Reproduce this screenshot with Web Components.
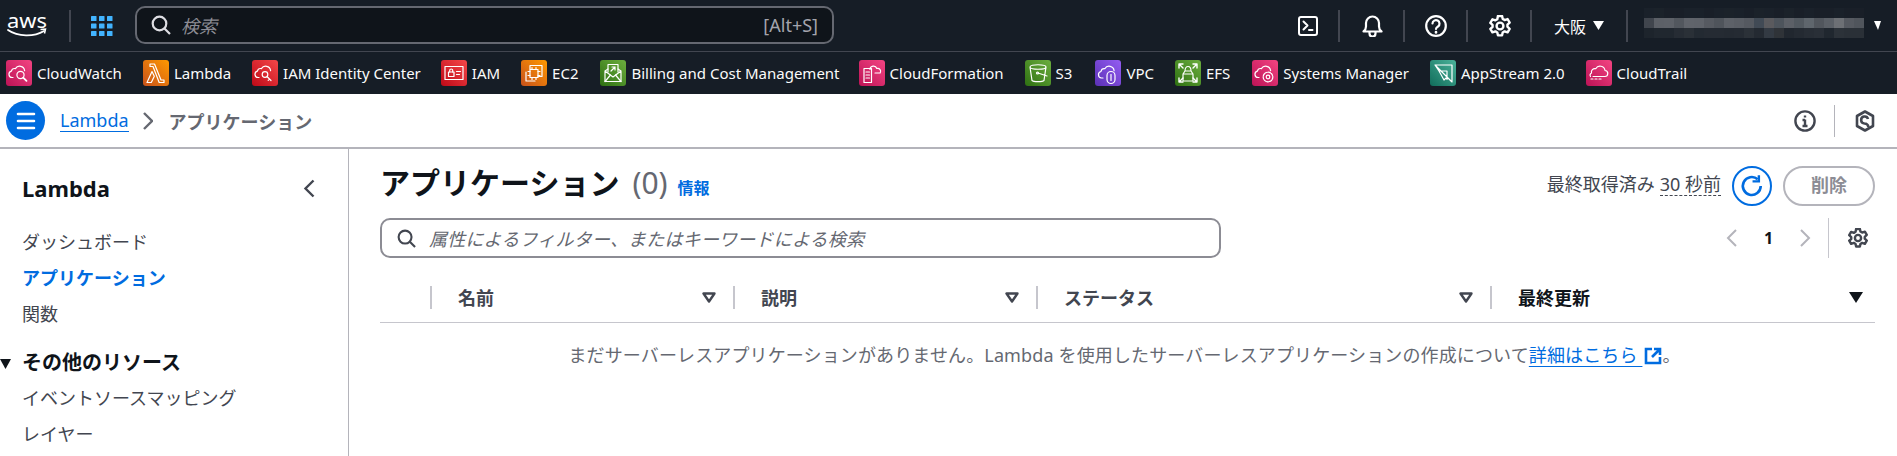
<!DOCTYPE html>
<html lang="ja"><head><meta charset="utf-8"><title>Lambda</title>
<style>
html,body{margin:0;padding:0;background:#fff;overflow:hidden}
body{font-family:"Noto Sans","Noto Sans CJK JP",sans-serif;color:#0f141a;width:1897px;height:456px}
</style></head><body>
<aws-console>
  <aws-topbar></aws-topbar>
  <aws-favbar>
    <fav-item c1="#f34482" c2="#bc1356" icon="cw" style="margin-left:6px">CloudWatch</fav-item>
    <fav-item c1="#ff9900" c2="#c8511b" icon="lambda">Lambda</fav-item>
    <fav-item c1="#f54749" c2="#be0917" icon="iamic">IAM Identity Center</fav-item>
    <fav-item c1="#f54749" c2="#be0917" icon="iam" style="margin-left:-1px">IAM</fav-item>
    <fav-item c1="#ff9900" c2="#c8511b" icon="ec2">EC2</fav-item>
    <fav-item c1="#6cae3e" c2="#2e7012" icon="bill" style="margin-left:1px">Billing and Cost Management</fav-item>
    <fav-item c1="#f34482" c2="#bc1356" icon="cfn" style="margin-left:-2px">CloudFormation</fav-item>
    <fav-item c1="#6cae3e" c2="#2e7012" icon="s3">S3</fav-item>
    <fav-item c1="#945df2" c2="#5a30b5" icon="vpc" style="margin-left:2px">VPC</fav-item>
    <fav-item c1="#6cae3e" c2="#2e7012" icon="efs">EFS</fav-item>
    <fav-item c1="#f34482" c2="#bc1356" icon="ssm" style="margin-left:1px">Systems Manager</fav-item>
    <fav-item c1="#4ab29a" c2="#116d5b" icon="as2">AppStream 2.0</fav-item>
    <fav-item c1="#f34482" c2="#bc1356" icon="ct">CloudTrail</fav-item>
  </aws-favbar>
  <aws-crumbs></aws-crumbs>
  <lambda-layout>
    <lambda-nav slot="nav"></lambda-nav>
    <apps-panel></apps-panel>
  </lambda-layout>
</aws-console>
<script>
const W='fill="none" stroke="#fff" stroke-width="1.2" stroke-linecap="round" stroke-linejoin="round"';
const CLOUD='M7 17.5H6a3.2 3.2 0 0 1-.6-6.3 3.4 3.4 0 0 1 4-2.6A5 5 0 0 1 18.6 10.6';
const ICONS={
 cw:`<path d="${CLOUD}"/><circle cx="14.5" cy="15" r="3.6"/><path d="M17.2 17.6l3.3 3.3" stroke-width="1.8"/>`,
 lambda:`<path d="M7 4h4.500l6.500 16h3v2.500h-4.800L10 6.500H7zM9 11.500l2.300 4.800-3 6.200H4z"/>`,
 iamic:`<path d="${CLOUD}"/><circle cx="13" cy="14.5" r="2.8"/><path d="M15 16.5l4 4M17.5 19l-1.3 1.3"/>`,
 iam:`<rect x="4" y="6.5" width="18" height="13"/><rect x="7.5" y="12" width="5.5" height="4.5"/><path d="M8.7 12v-1.5a1.5 1.5 0 0 1 3 0V12M15.5 11.5h4M15.5 14.5h3"/>`,
 ec2:`<path d="M9 9V5.500h12v11h-4M5 12v9h9"/><rect x="9" y="9.500" width="8" height="8"/><path d="M11 7.500v2M15 7.500v2M11 17.500v2M15 17.500v2M7 11.500h2M7 15.500h2M17 11.500h2M17 15.500h2"/>`,
 bill:`<path d="M5 11v10.500h16V11l-3-2M8 9l-3 2 8 6 8-6"/><path d="M8 12V4.500h10V12M5 21.500l5.500-6.500M21 21.500L15.500 15M11 11l4-4M12 7h3v3"/>`,
 cfn:`<path d="M11 9.500a3.500 3.500 0 0 1 6.800-1 3 3 0 0 1 3.400 4.500H16"/><path d="M5 8.500h7.500v14H5zM7 12h3.500M7 15h3.500M7 18h3.500"/>`,
 s3:`<path d="M5 7c0-3 16-3 16 0s-16 3-16 0zM5 7l2 13.500c1.500 1.500 10.500 1.500 12 0L21 7M13 13l9 3"/><circle cx="12.500" cy="13" r="1"/>`,
 vpc:`<path d="M8 18H6.500a3.300 3.300 0 0 1-.5-6.500 3.400 3.400 0 0 1 3.800-2.800 5 5 0 0 1 9.300 2"/><rect x="12" y="11.500" width="8" height="12" rx="4"/><path d="M16 14.500v6"/>`,
 efs:`<path d="M8 14v7h10v-7zM8 14l2-3h6l2 3M10 11c0-6 6-6 6 0"/><path d="M4 8V4h4M5 5l3 3M22 8V4h-4M21 5l-3 3M4 18v4h4M5 21l3-3M22 18v4h-4M21 21l-3-3" stroke-width="1.400"/>`,
 ssm:`<path d="${CLOUD}"/><circle cx="16" cy="17" r="4.800" stroke-dasharray="2.200 1"/><circle cx="16" cy="17" r="1.800"/>`,
 as2:`<path d="M5 5h17v17zM5 5l4 6h8v8.500M9 11l5 9 3-3"/>`,
 ct:`<path d="M7 16.500h11.500a3 3 0 0 0 .5-6 5 5 0 0 0-9.300-1.800 3.500 3.500 0 0 0-4.200 4.300 2.300 2.300 0 0 0-1 3.500"/><path d="M5 19h2M9 19h2M13 19h2M9 16.500h0"/>`
};
function def(name,html,init){customElements.define(name,class extends HTMLElement{
  connectedCallback(){ if(this.shadowRoot)return; const r=this.attachShadow({mode:'open'}); r.innerHTML=typeof html==='function'?html(this):html; init&&init(r,this);}
});}
const gear=(s,c,sw=2)=>`<svg width="${s}" height="${s}" viewBox="0.6 0.6 14.8 14.8" fill="none" stroke="${c}" stroke-width="${sw*14.8/s}" stroke-linejoin="round"><path d="M6.600 1.300h2.800l.4 1.900 1.300.8 2-.7 1.400 2.400-1.500 1.400v1.400l1.500 1.400-1.400 2.400-2-.7-1.300.8-.4 1.900H6.600l-.4-1.900-1.300-.8-2 .7-1.400-2.400L3 8.700V7.300L1.500 5.900l1.400-2.400 2 .7 1.300-.8z"/><circle cx="8" cy="8" r="2.300"/></svg>`;

def('aws-console',`<style>:host{display:flex;flex-direction:column;width:1897px;height:456px;overflow:hidden}</style><slot></slot>`);

def('top-div',`<style>:host{display:block;width:2px;height:32px;background:#424650;flex:none}</style>`);

def('aws-topbar',`<style>
:host{display:flex;align-items:center;height:51px;background:#161d26;border-bottom:1px solid #424650;color:#fff;flex:none;box-sizing:content-box}
svg{display:block;flex:none}
.search{box-sizing:border-box;width:699px;height:38px;margin:-1px 0 0 22px;border:2px solid #656871;border-radius:10px;background:#0f141a;display:flex;align-items:center;padding:0 14px;color:#a4a4ad;font-size:18px}
.search em{font-style:italic;margin-left:10px;flex:1;color:#8c8c94}
.ic{display:flex;justify-content:center;align-items:center;flex:none}
.reg{display:flex;align-items:center;font-size:16px;color:#fff}
.blur{display:grid;grid-template-columns:repeat(22,10px);grid-auto-rows:10px;flex:none;margin-bottom:5px}
.blur i{display:block}
</style>
<svg style="margin-left:7px" width="41" height="41" viewBox="0 -8 41 41"><text x="0" y="15" font-family="Noto Sans" font-size="19" fill="#fff" textLength="40" lengthAdjust="spacingAndGlyphs">aws</text><path d="M1 17c10 7 26 7 36 1" fill="none" stroke="#fff" stroke-width="1.800" stroke-linecap="round"/><path d="M33.500 16.500l5-.5-1 4.500" fill="none" stroke="#fff" stroke-width="1.500"/></svg>
<top-div style="margin-left:21px"></top-div>
<svg style="margin-left:20px" width="22" height="20" viewBox="0 0 22 20" fill="#42b4ff"><rect x="0" y="0" width="5.500" height="5" rx=".6"/><rect x="8" y="0" width="5.500" height="5" rx=".6"/><rect x="16" y="0" width="5.500" height="5" rx=".6"/><rect x="0" y="7.500" width="5.500" height="5" rx=".6"/><rect x="8" y="7.500" width="5.500" height="5" rx=".6"/><rect x="16" y="7.500" width="5.500" height="5" rx=".6"/><rect x="0" y="15" width="5.500" height="5" rx=".6"/><rect x="8" y="15" width="5.500" height="5" rx=".6"/><rect x="16" y="15" width="5.500" height="5" rx=".6"/></svg>
<div class="search"><svg width="20" height="20" viewBox="0 0 20 20" fill="none" stroke="#dedee3" stroke-width="2.200"><circle cx="8.500" cy="8.500" r="6.800"/><path d="M13.500 13.500l5.500 5.500"/></svg><em>検索</em><span>[Alt+S]</span></div>
<svg style="margin-left:464px" width="20" height="20" viewBox="0 0 20 20" fill="none" stroke="#fff" stroke-width="2" stroke-linejoin="round" stroke-linecap="round"><rect x="1" y="1" width="18" height="18" rx="2"/><path d="M5.500 5.500L9.500 9.500 5.500 13.500M11 14h3.500"/></svg>
<top-div style="margin-left:20px"></top-div>
<svg style="margin-left:22px" width="21" height="22" viewBox="0 0 21 22" fill="none" stroke="#fff" stroke-width="2.200" stroke-linejoin="round"><path d="M1.500 16.500c2-1.500 2.500-3 2.500-5V8a6.500 6.500 0 0 1 13 0v3.500c0 2 .5 3.500 2.500 5z"/><path d="M7.500 17v1.500a3 3 0 0 0 6 0V17"/></svg>
<top-div style="margin-left:20px"></top-div>
<svg style="margin-left:20px" width="22" height="22" viewBox="0 0 22 22" fill="none" stroke="#fff" stroke-width="2.200" stroke-linecap="round"><circle cx="11" cy="11" r="9.800"/><path d="M7.500 8.500a3.500 3.500 0 1 1 5.500 3c-1.300.8-2 1.300-2 2.500"/><path d="M11 17v.4" stroke-width="2.600"/></svg>
<top-div style="margin-left:19px"></top-div>
<span class="ic" style="margin-left:21px">${gear(22,'#fff',2.4)}</span>
<top-div style="margin-left:19px"></top-div>
<div class="reg" style="margin-left:22px"><span>大阪</span><svg style="margin-left:7px" width="11" height="9" viewBox="0 0 11 9" fill="#fff"><path d="M0 0h11L5.500 9z"/></svg></div>
<top-div style="margin-left:22px"></top-div>
<div class="blur" id="b" style="margin-left:16px"></div>
<svg style="margin-left:10px" width="7" height="9" viewBox="0 0 7 9" fill="#fff"><path d="M0 0h7L4 9z"/></svg>`,
(r)=>{const g=r.getElementById('b');
 const rows=[
  '1a212a 1b222a 191f28 191f28 1a212a 1a212a 191f28 1a212a 1b222a 1a212a 191f28 1b222a 1a212a 191f28 1b222a 191f28 1a212a 191f28 191f28 1a212a 191f28 191f28',
  '40454d 5c6067 5d6168 52575e 60646b 5f636a 565a61 4f545b 5d6168 5a5e65 555960 414a55 5a5a5e 4d545c 5c6067 525960 5f666d 51565d 5b6067 6d7075 565a61 50555c',
  '1d242c 20272f 20272f 262c34 2a3037 232a32 252b33 252b33 242a32 252b33 2b3138 242a32 333a43 2f3338 21272f 242a32 272d35 292f37 20272f 2c3239 2a3037 2a3037'];
 rows.join(' ').split(' ').forEach(c=>{const i=document.createElement('i');i.style.background='#'+c;g.append(i)});
});

def('aws-favbar',`<style>:host{display:flex;align-items:center;background:#161d26;flex:none;gap:21px;padding-bottom:1px;box-sizing:border-box;height:42px}</style><slot></slot>`);

def('fav-item',(h)=>`<style>
:host{display:inline-flex;align-items:center;color:#fbfbfb;font-size:15px;white-space:nowrap;flex:none}
.i{width:26px;height:26px;border-radius:3px;margin-right:5px;background:linear-gradient(45deg,${h.getAttribute('c2')},${h.getAttribute('c1')});display:block;flex:none}
svg{display:block}
</style><span class="i"><svg width="26" height="26" viewBox="0 0 26 26" ${W}>${ICONS[h.getAttribute('icon')]}</svg></span><slot></slot>`);

def('aws-crumbs',`<style>
:host{display:flex;align-items:center;height:55px;box-sizing:border-box;border-bottom:2px solid #b4b4bb;background:#fff;flex:none;padding-bottom:0}
.menu{width:39px;height:39px;border-radius:50%;background:#006ce0;margin-left:6px;display:flex;align-items:center;justify-content:center;flex:none}
a{color:#006ce0;font-size:18px;margin-left:15px;text-decoration:none;border-bottom:1px solid #006ce0;line-height:22px}
.cur{font-size:18px;font-weight:700;color:#656871;margin-left:16px}
.sp{flex:1}
.d{width:1px;height:32px;background:#b4b4bb;margin:0 20px 0 18px}
svg{display:block;flex:none}
</style>
<div class="menu"><svg width="20" height="18" viewBox="0 0 20 18" stroke="#fff" stroke-width="2.600" stroke-linecap="round"><path d="M2 2h16M2 9h16M2 16h16"/></svg></div>
<a>Lambda</a>
<svg style="margin-left:14px" width="10" height="18" viewBox="0 0 10 18" fill="none" stroke="#656871" stroke-width="2.400"><path d="M1 1l8 8-8 8"/></svg>
<span class="cur">アプリケーション</span>
<span class="sp"></span>
<svg width="22" height="22" viewBox="0 0 22 22" fill="none" stroke="#424650" stroke-width="2.400"><circle cx="11" cy="11" r="9.600"/><path d="M11 9.500V16M8.500 16h5M8.500 10H11" /><path d="M11 5.500v2"/></svg>
<span class="d"></span>
<svg style="margin-right:22px" width="20" height="22" viewBox="0 0 20 22" fill="none" stroke="#424650" stroke-width="2.600" stroke-linejoin="round"><path d="M10 1.500l8 4.500v10l-8 4.500-8-4.500V6z"/><path d="M13 9a3.500 3.500 0 1 0-3.500 4.500c2 0 3.500 1.300 4 3.500" /></svg>`);

def('lambda-layout',`<style>:host{display:flex;flex:1;min-height:0;background:#fff}</style><slot name="nav"></slot><slot></slot>`);

def('lambda-nav',`<style>
:host{display:block;box-sizing:border-box;width:349px;border-right:1px solid #b4b4bb;flex:none;overflow:hidden;position:relative;color:#424650;font-size:18px}
.head{display:flex;justify-content:space-between;align-items:center;padding:22px 33px 0 22px;height:34px;color:#0f141a;font-weight:700;font-size:22px}
ul{list-style:none;margin:0;padding:0 0 0 22px}
li{height:36px;line-height:36px;white-space:nowrap}
.first{margin-top:19px}
.active{color:#006ce0;font-weight:700}
.sec{position:relative;margin:13px 0 0;padding-left:22px;font-size:20px;font-weight:700;color:#0f141a;height:35px;line-height:36px}
.sec svg{position:absolute;left:0;top:14px}
</style>
<div class="head"><span>Lambda</span><svg width="12" height="19" viewBox="0 0 12 19" fill="none" stroke="#424650" stroke-width="2.400"><path d="M10.500 1.500L2.500 9.500l8 8"/></svg></div>
<ul class="first"><li>ダッシュボード</li><li class="active">アプリケーション</li><li>関数</li></ul>
<div class="sec"><svg width="11" height="10" viewBox="0 0 11 10" fill="#0f141a"><path d="M0 0h11L5.500 10z"/></svg>その他のリソース</div>
<ul><li>イベントソースマッピング</li><li>レイヤー</li></ul>`);

def('sort-head',(h)=>`<style>
:host{display:flex;align-items:center;justify-content:space-between;position:relative;height:44px;padding:0 ${h.getAttribute('pr')||'17px'} 0 28px;font-size:18px;font-weight:700;color:#${h.hasAttribute('on')?'0f141a':'424650'}}
:host::before{content:"";position:absolute;left:0;top:11px;height:23px;width:2px;background:#c6c6cd}
svg{display:block}
</style><slot></slot>${h.hasAttribute('on')
?'<svg width="14" height="11" viewBox="0 0 14 11" fill="#0f141a"><path d="M0 0h14L7 11z"/></svg>'
:'<svg width="14" height="11" viewBox="0 0 14 11" fill="none" stroke="#424650" stroke-width="2.400" stroke-linejoin="round"><path d="M1.500 1.500h11L7 9.500z"/></svg>'}`);

def('apps-panel',`<style>
:host{display:block;flex:1;min-width:0;padding:0 22px 0 31px;box-sizing:border-box}
.title{display:flex;justify-content:space-between;align-items:flex-start;height:69px}
.h{display:flex;align-items:baseline;padding-top:13px;white-space:nowrap}
h1{margin:0;font-size:30px;font-weight:700;line-height:42px;color:#0f141a}
h1 span{font-weight:400;color:#656871;margin-left:13px}
.info{color:#006ce0;font-size:16px;font-weight:700;margin-left:10px}
.acts{display:flex;align-items:center;padding-top:17px;font-size:18px;color:#424650;white-space:nowrap}
.t{margin-bottom:6px}
.ago{border-bottom:1px dashed #424650;margin-left:5px;line-height:22px;margin-bottom:4px;margin-top:0}
.rf{width:40px;height:40px;box-sizing:border-box;border:2px solid #006ce0;border-radius:50%;margin-left:11px;display:flex;align-items:center;justify-content:center}
.del{width:92px;height:40px;box-sizing:border-box;border:2px solid #b4b4bb;border-radius:20px;margin-left:11px;text-align:center;line-height:35px;font-size:18px;font-weight:700;color:#8c8c94}
.tools{display:flex;align-items:flex-start;height:57px}
.find{box-sizing:border-box;width:841px;height:40px;border:2px solid #8c8c94;border-radius:10px;display:flex;align-items:center;padding-left:15px;color:#656871;font-size:18px}
.find em{margin-left:13px;font-style:italic;letter-spacing:.2px}
.pg{margin-left:auto;display:flex;align-items:center;height:40px;font-size:16px;font-weight:700;color:#0f141a}
.pg .n{width:63px;text-align:center}
.pv{width:1px;height:40px;background:#c6c6cd;margin:0 19px 0 17px}
.grid{display:grid;grid-template-columns:50px 303px 303px 454px 385px;border-bottom:1px solid #c6c6cd;height:47px;overflow:hidden}
.empty{text-align:center;margin-top:18px;font-size:18px;color:#656871;white-space:nowrap;padding-right:6px;letter-spacing:.13px}
.empty a{color:#006ce0;text-decoration:underline;text-underline-offset:4px}
svg{display:block;flex:none}
.empty svg{display:inline-block;vertical-align:-3px;margin-left:2px}
</style>
<div class="title">
 <div class="h"><h1>アプリケーション<span>(0)</span></h1><span class="info">情報</span></div>
 <div class="acts"><span class="t">最終取得済み</span><span class="ago">30 秒前</span>
  <div class="rf"><svg width="24" height="24" viewBox="0 0 22 22" fill="none" stroke="#006ce0" stroke-width="2.400"><path d="M19 11a8.200 8.200 0 1 1-2.800-6.200"/><path d="M11.500 6.800h5.800V1.200" stroke-width="2.200"/></svg></div>
  <div class="del">削除</div></div>
</div>
<div class="tools">
 <div class="find"><svg width="19" height="19" viewBox="0 0 20 20" fill="none" stroke="#424650" stroke-width="2.200"><circle cx="8.500" cy="8.500" r="6.800"/><path d="M13.500 13.500l5.500 5.500"/></svg><em>属性によるフィルター、またはキーワードによる検索</em></div>
 <div class="pg"><svg width="11" height="18" viewBox="0 0 11 18" fill="none" stroke="#b4b4bb" stroke-width="2"><path d="M10 1L2 9l8 8"/></svg><span class="n">1</span><svg width="11" height="18" viewBox="0 0 11 18" fill="none" stroke="#b4b4bb" stroke-width="2"><path d="M1 1l8 8-8 8"/></svg><span class="pv"></span>${gear(20,'#424650',2.4)}<span style="width:7px"></span></div>
</div>
<div class="grid"><span></span><sort-head>名前</sort-head><sort-head>説明</sort-head><sort-head>ステータス</sort-head><sort-head on pr="12px">最終更新</sort-head></div>
<div class="empty">まだサーバーレスアプリケーションがありません。Lambda を使用したサーバーレスアプリケーションの作成について<a>詳細はこちら&nbsp;</a><svg width="18" height="18" viewBox="0 0 18 18" fill="none" stroke="#006ce0" stroke-width="2.600"><path d="M8 2H2v14h14v-6M10 2h6v6M16 2L8 10"/></svg>。</div>`);
</script></body></html>
